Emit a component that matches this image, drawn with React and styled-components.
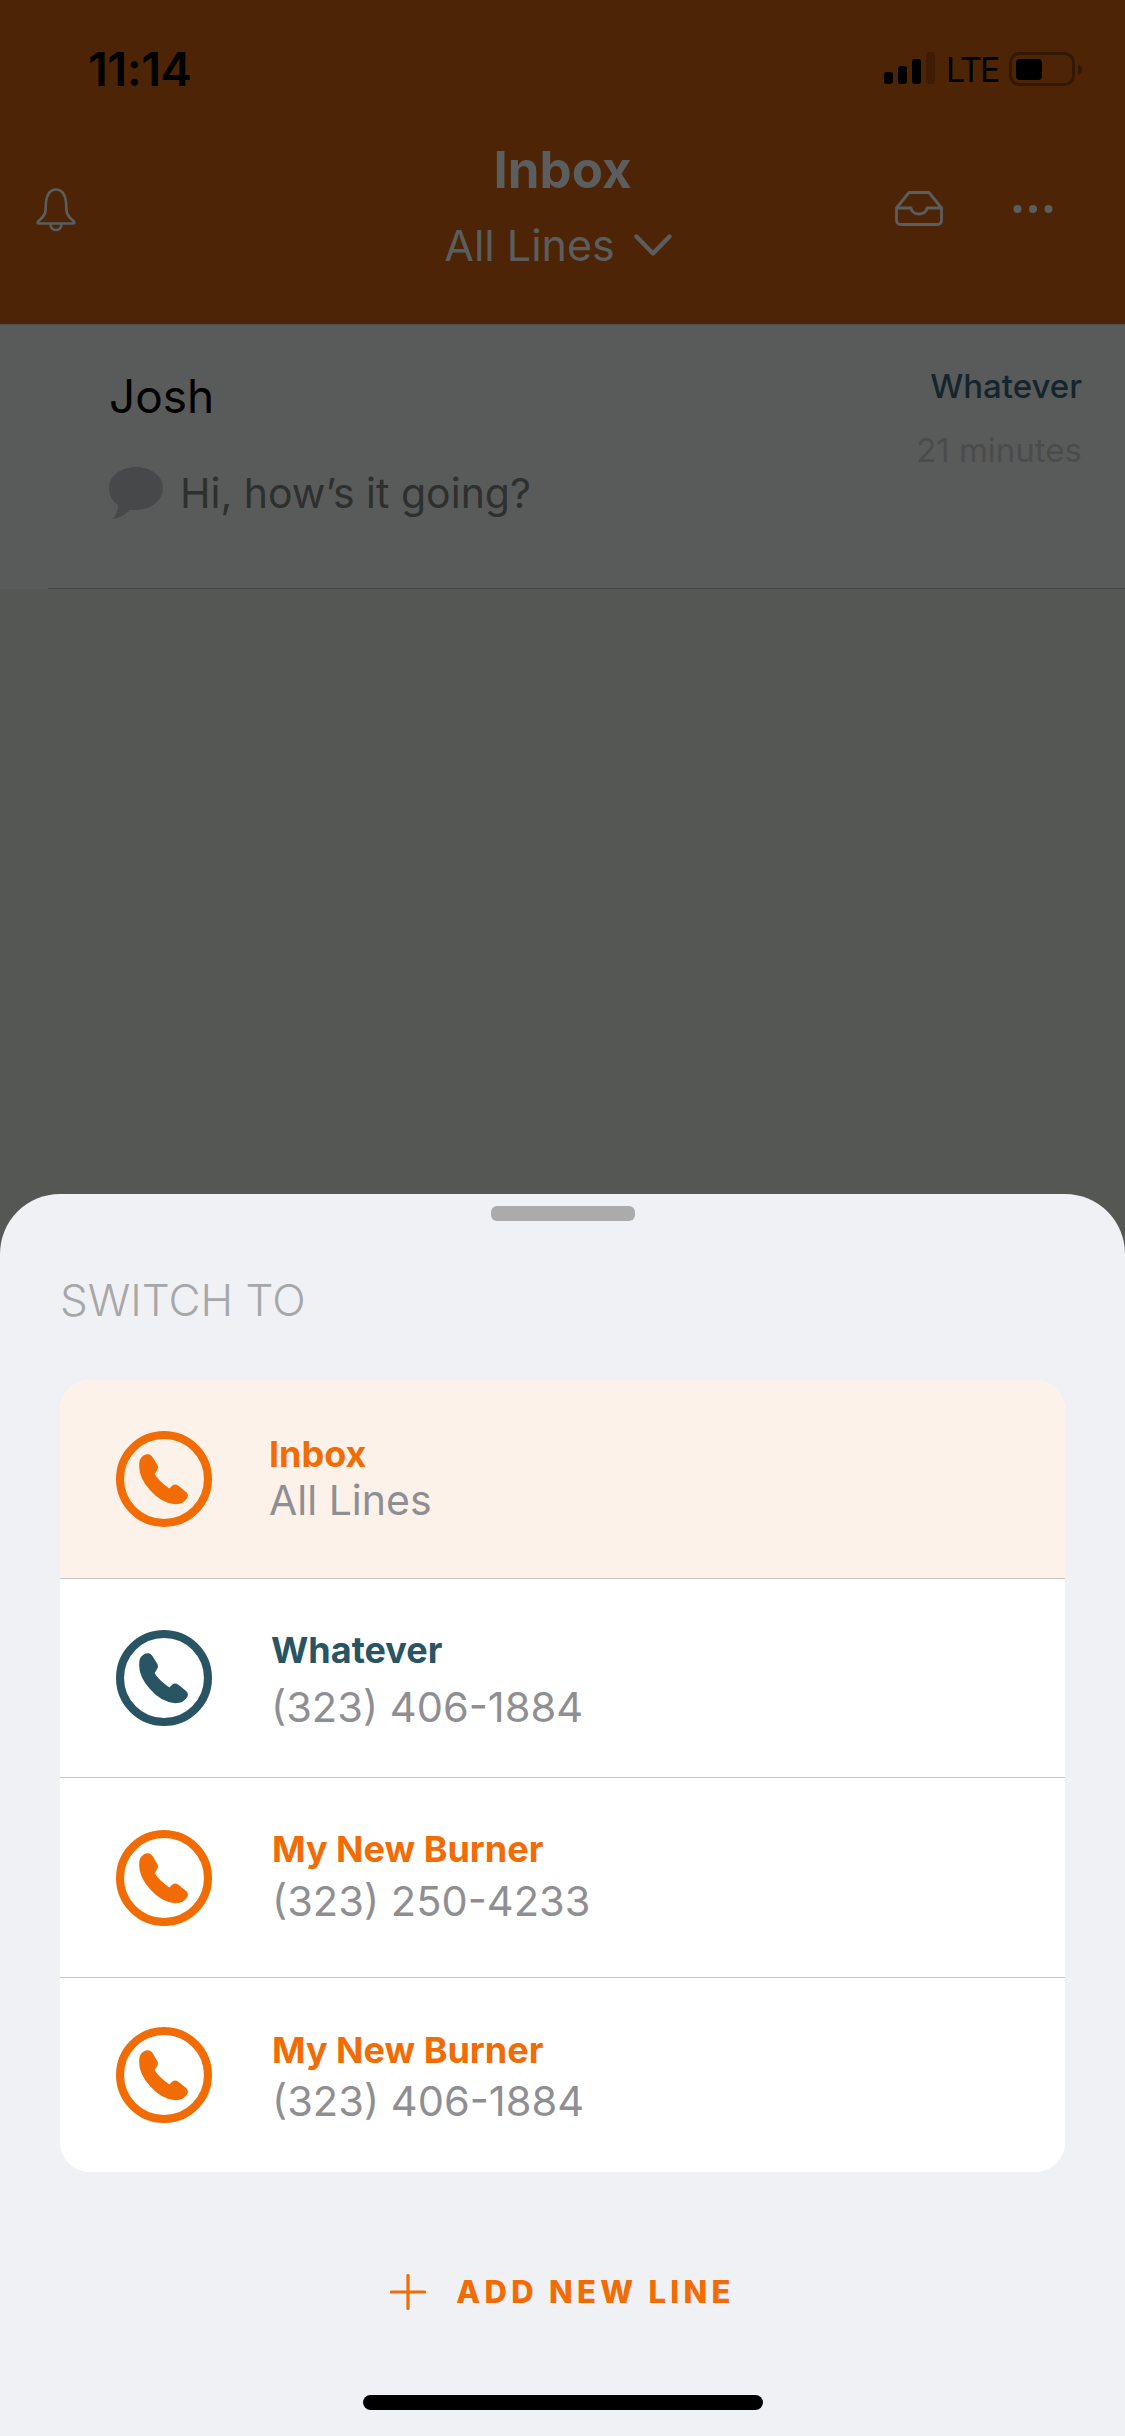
import styled, { createGlobalStyle } from 'styled-components';

const ORANGE = '#f26c05';
const TEAL = '#285464';
const DIM_ICON = '#5a5e5e';

const GlobalStyle = createGlobalStyle`
  html, body {
    margin: 0;
    padding: 0;
    background: #565856;
    font-family: Inter, "Liberation Sans", sans-serif;
  }
`;

const Page = styled.div`
  width: 1125px;
  height: 2436px;
  display: flex;
  flex-direction: column;
  overflow: hidden;
  background: #555755;
`;

const Header = styled.header`
  height: 324px;
  flex-shrink: 0;
  background: #4e2406;
  border-bottom: 1px solid #4c4e4d;
  display: flex;
  flex-direction: column;
`;

const StatusBar = styled.div`
  padding: 52px 43px 0 88px;
  box-sizing: border-box;
  height: 138px;
  display: flex;
  justify-content: space-between;
  align-items: flex-start;
`;

const Clock = styled.span`
  font-size: 47px;
  line-height: 34px;
  font-weight: 600;
  color: #000;
  letter-spacing: -0.5px;
`;

const StatusIcons = styled.div`
  display: flex;
  align-items: flex-start;
  gap: 11px;
`;

const Carrier = styled.span`
  font-size: 34px;
  line-height: 36px;
  width: 52px;
  font-weight: 400;
  letter-spacing: -2px;
  color: #000;
`;

const NavRow = styled.div`
  flex: 1;
  display: grid;
  grid-template-columns: 300px 1fr 300px;
`;

const NavLeft = styled.div`
  padding: 50px 0 0 36px;
`;

const NavCenter = styled.div`
  display: flex;
  flex-direction: column;
  align-items: center;
`;

const NavRight = styled.div`
  padding: 53px 0 0 70px;
  display: flex;
  align-items: flex-start;
  gap: 70px;
`;

const DotsSlot = styled.div`
  padding-top: 13px;
  display: flex;
`;

const NavTitle = styled.div`
  margin-top: 3px;
  font-size: 51px;
  line-height: 58px;
  font-weight: 700;
  color: ${DIM_ICON};
`;

const LineSwitch = styled.div`
  margin-top: 21px;
  padding-right: 9px;
  display: flex;
  align-items: center;
  gap: 19px;
  font-size: 43px;
  line-height: 50px;
  font-weight: 400;
  color: ${DIM_ICON};
`;

const ThreadArea = styled.div`
  flex-shrink: 0;
  background: #595b5a;
`;

const ThreadRow = styled.div`
  height: 264px;
  box-sizing: border-box;
  margin-left: 48px;
  padding: 43px 43px 0 61px;
  border-bottom: 1px solid #454746;
  display: flex;
  justify-content: space-between;
`;

const ThreadBody = styled.div`
  display: flex;
  flex-direction: column;
`;

const ThreadName = styled.div`
  font-size: 46px;
  line-height: 56px;
  color: #000;
`;

const Preview = styled.div`
  margin-top: 43px;
  display: flex;
  align-items: center;
  gap: 17px;
  font-size: 41px;
  line-height: 52px;
  color: #2e2f2f;
`;

const ThreadMeta = styled.div`
  margin-top: -2px;
  display: flex;
  flex-direction: column;
  align-items: flex-end;
`;

const MetaLine = styled.div`
  font-size: 33px;
  line-height: 40px;
  color: ${(p) => p.$color};
  font-weight: ${(p) => p.$weight || 400};
  margin-top: ${(p) => p.$top || 0}px;
`;

const Spacer = styled.div`
  flex: 1;
`;

const Sheet = styled.section`
  height: 1242px;
  flex-shrink: 0;
  box-sizing: border-box;
  background: #f0f1f5;
  border-radius: 60px 60px 0 0;
  padding: 12px 60px 0;
  display: flex;
  flex-direction: column;
`;

const Handle = styled.div`
  width: 144px;
  height: 15px;
  border-radius: 6px;
  background: #ababab;
  align-self: center;
`;

const SheetTitle = styled.div`
  margin-top: 52px;
  font-size: 44px;
  line-height: 54px;
  font-weight: 300;
  color: #a6a7a9;
`;

const Card = styled.div`
  margin-top: 53px;
  height: 792px;
  border-radius: 30px;
  overflow: hidden;
  background: #fff;
  display: flex;
  flex-direction: column;
`;

const LineRow = styled.div`
  height: ${(p) => p.$height}px;
  box-sizing: border-box;
  padding-left: 56px;
  display: flex;
  align-items: center;
  background: ${(p) => (p.$active ? '#fcf2ea' : '#fff')};
  border-bottom: ${(p) => (p.$last ? 'none' : '1px solid #c6c4c6')};
`;

const LineText = styled.div`
  margin-left: ${(p) => p.$inset}px;
  padding-top: ${(p) => p.$drop}px;
  display: flex;
  flex-direction: column;
`;

const LineName = styled.div`
  font-size: 36px;
  line-height: 40px;
  font-weight: 700;
  color: ${(p) => p.$color};
`;

const LineNumber = styled.div`
  margin-top: ${(p) => p.$gap}px;
  font-size: ${(p) => p.$size}px;
  line-height: 50px;
  font-weight: 400;
  color: #8f8f93;
`;

const AddLine = styled.div`
  margin-top: 101px;
  display: flex;
  justify-content: center;
  align-items: center;
  gap: 30px;
  font-size: 31px;
  line-height: 38px;
  font-weight: 800;
  letter-spacing: 4.3px;
  color: ${ORANGE};
`;

const HomeBar = styled.div`
  margin-top: 84px;
  width: 400px;
  height: 15px;
  border-radius: 8px;
  background: #000;
  align-self: center;
`;

function SignalIcon() {
  return (
    <svg width="51" height="34" viewBox="0 0 51 34">
      <rect x="0" y="20" width="9" height="12" rx="3" fill="#000" />
      <rect x="14" y="14" width="9" height="18" rx="3" fill="#000" />
      <rect x="28" y="7" width="9" height="25" rx="3" fill="#000" />
      <rect x="42" y="0" width="9" height="32" rx="3" fill="#3f1c04" />
    </svg>
  );
}

function BatteryIcon() {
  return (
    <svg width="73" height="36" viewBox="0 0 73 36">
      <rect x="1.5" y="1.5" width="63" height="31" rx="9" fill="none" stroke="#341804" strokeWidth="3" />
      <rect x="7" y="7" width="26" height="21" rx="4" fill="#000" />
      <path d="M69 12 L73 15 L73 20 L69 23Z" fill="#341804" />
    </svg>
  );
}

function BellIcon() {
  return (
    <svg width="40" height="44" viewBox="0 0 40 44" fill="none" stroke={DIM_ICON} strokeWidth="2.6" strokeLinejoin="round">
      <path d="M20 1.5 C14 1.5 10.5 7 10 14 L9.5 23 C9 28 5 31 2 33.5 Q1 35.5 3 35.5 L37 35.5 Q39 35.5 38 33.5 C35 31 31 28 30.5 23 L30 14 C29.5 7 26 1.5 20 1.5Z" />
      <path d="M14.5 36 C14.5 44 25.5 44 25.5 36" />
    </svg>
  );
}

function TrayIcon() {
  return (
    <svg width="48" height="35" viewBox="0 0 48 35" fill="none" stroke={DIM_ICON} strokeWidth="2.8" strokeLinejoin="round" strokeLinecap="round">
      <path d="M14 1.5 L34 1.5 L46.5 17 L46.5 29 Q46.5 33.5 42 33.5 L6 33.5 Q1.5 33.5 1.5 29 L1.5 17Z" />
      <path d="M1.5 17 L16 17 C17 25 31 25 32 17 L46.5 17" />
    </svg>
  );
}

function DotsIcon() {
  return (
    <svg width="40" height="10" viewBox="0 0 40 10" fill={DIM_ICON}>
      <circle cx="4.5" cy="5" r="4" />
      <circle cx="20" cy="5" r="4" />
      <circle cx="35.5" cy="5" r="4" />
    </svg>
  );
}

function ChevronIcon() {
  return (
    <svg width="38" height="22" viewBox="0 0 38 22" fill="none" stroke={DIM_ICON} strokeWidth="4.4" strokeLinecap="round" strokeLinejoin="round">
      <path d="M2.5 2.5 L19 19.5 L35.500 2.500" />
    </svg>
  );
}

function BubbleIcon() {
  return (
    <svg width="54" height="52" viewBox="0 0 54 52" fill="#474849">
      <path d="M27 0 C42 0 54 9 54 21 C54 33 42 43 27 43 C25 43 23 43 21 42.500 C17 47 11 51 4 52 C7 48 9 44 9 38 C3 34 0 28 0 21 C0 9 12 0 27 0Z" />
    </svg>
  );
}

function PhoneCircle({ color }) {
  return (
    <svg width="96" height="96" viewBox="79 64 286 286">
      <circle cx="222" cy="207" r="131" fill="none" stroke={color} strokeWidth="24" />
      <path
        d="M150 150 Q158 133 175 133 Q183 133 190 145 L203 167 Q207 175 200 183 L194 192 Q205 212 238 235 L247 226 Q255 220 265 227 L287 245 Q296 253 292 262 Q282 282 255 282 Q215 280 180 240 Q148 205 148 170 Q148 158 150 150Z"
        fill={color}
      />
    </svg>
  );
}

function PlusIcon() {
  return (
    <svg width="36" height="36" viewBox="0 0 36 36" stroke={ORANGE} strokeWidth="3.2" strokeLinecap="round">
      <path d="M18 1.500 L18 34.500 M1.500 18 L34.500 18" />
    </svg>
  );
}

const lines = [
  { name: 'Inbox', sub: 'All Lines', color: ORANGE, height: 199, inset: 57, gap: 1, drop: 0, size: 41, active: true },
  { name: 'Whatever', sub: '(323) 406-1884', color: TEAL, height: 199, inset: 59, gap: 12, drop: 6, size: 41.6 },
  { name: 'My New Burner', sub: '(323) 250-4233', color: ORANGE, height: 200, inset: 60, gap: 7, drop: 0, size: 41.6 },
  { name: 'My New Burner', sub: '(323) 406-1884', color: ORANGE, height: 194, inset: 60, gap: 6, drop: 6, size: 41.6, last: true },
];

export default function App() {
  return (
    <Page>
      <GlobalStyle />
      <Header>
        <StatusBar>
          <Clock>11:14</Clock>
          <StatusIcons>
            <SignalIcon />
            <Carrier>LTE</Carrier>
            <BatteryIcon />
          </StatusIcons>
        </StatusBar>
        <NavRow>
          <NavLeft>
            <BellIcon />
          </NavLeft>
          <NavCenter>
            <NavTitle>Inbox</NavTitle>
            <LineSwitch>
              All Lines
              <ChevronIcon />
            </LineSwitch>
          </NavCenter>
          <NavRight>
            <TrayIcon />
            <DotsSlot>
              <DotsIcon />
            </DotsSlot>
          </NavRight>
        </NavRow>
      </Header>

      <ThreadArea>
        <ThreadRow>
          <ThreadBody>
            <ThreadName>Josh</ThreadName>
            <Preview>
              <BubbleIcon />
              Hi, how’s it going?
            </Preview>
          </ThreadBody>
          <ThreadMeta>
            <MetaLine $color="#13252d" $weight={500}>Whatever</MetaLine>
            <MetaLine $color="#4a4c4c" $top={24}>21 minutes</MetaLine>
          </ThreadMeta>
        </ThreadRow>
      </ThreadArea>

      <Spacer />

      <Sheet>
        <Handle />
        <SheetTitle>SWITCH TO</SheetTitle>
        <Card>
          {lines.map((line, i) => (
            <LineRow key={i} $height={line.height} $active={line.active} $last={line.last}>
              <PhoneCircle color={line.color} />
              <LineText $inset={line.inset} $drop={line.drop}>
                <LineName $color={line.color}>{line.name}</LineName>
                <LineNumber $gap={line.gap} $size={line.size}>{line.sub}</LineNumber>
              </LineText>
            </LineRow>
          ))}
        </Card>
        <AddLine>
          <PlusIcon />
          ADD NEW LINE
        </AddLine>
        <HomeBar />
      </Sheet>
    </Page>
  );
}
